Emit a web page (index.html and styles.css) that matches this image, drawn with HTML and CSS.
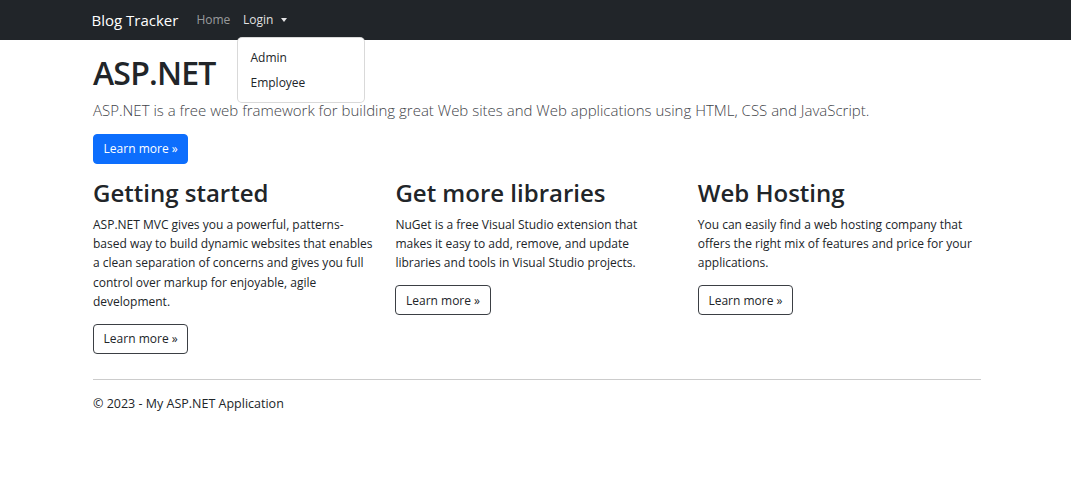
FILE: index.html
```html
<!DOCTYPE html>
<html lang="en">
<head>
<meta charset="utf-8">
<title>Home Page - Blog Tracker</title>
<link rel="stylesheet" href="styles.css">
</head>
<body>
<header class="navbar">
  <div class="nav-inner">
    <a class="brand" href="#">Blog Tracker</a>
    <ul class="nav-links">
      <li><a class="nav-link" href="#">Home</a></li>
      <li class="dropdown">
        <a class="nav-link nav-link-open" href="#">Login <span class="caret"></span></a>
        <ul class="dropdown-menu">
          <li><a class="dropdown-item" href="#">Admin</a></li>
          <li><a class="dropdown-item" href="#">Employee</a></li>
        </ul>
      </li>
    </ul>
  </div>
</header>
<main class="container">
  <section class="hero">
    <h1 class="hero-title">ASP.NET</h1>
    <p class="lead">ASP.NET is a free web framework for building great Web sites and Web applications using HTML, CSS and JavaScript.</p>
    <a class="btn btn-primary" href="#">Learn more »</a>
  </section>
  <section class="features">
    <div class="feature">
      <h2>Getting started</h2>
      <p>ASP.NET MVC gives you a powerful, patterns-based way to build dynamic websites that enables a clean separation of concerns and gives you full control over markup for enjoyable, agile development.</p>
      <a class="btn btn-outline" href="#">Learn more »</a>
    </div>
    <div class="feature">
      <h2>Get more libraries</h2>
      <p class="balanced">NuGet is a free Visual Studio extension that makes it easy to add, remove, and update libraries and tools in Visual Studio projects.</p>
      <a class="btn btn-outline" href="#">Learn more »</a>
    </div>
    <div class="feature">
      <h2>Web Hosting</h2>
      <p>You can easily find a web hosting company that offers the right mix of features and price for your applications.</p>
      <a class="btn btn-outline" href="#">Learn more »</a>
    </div>
  </section>
  <hr class="divider">
  <footer class="footer">
    <p>© 2023 - My ASP.NET Application</p>
  </footer>
</main>
</body>
</html>
```
FILE: styles.css
```css
* { box-sizing: border-box; }
html, body { margin: 0; padding: 0; }
body {
  font-family: "Open Sans", "Noto Sans", sans-serif;
  font-size: 12px;
  line-height: 19.2px;
  color: #212529;
  background: #fff;
}
a { text-decoration: none; }
ul { list-style: none; margin: 0; padding: 0; }
.container { width: 888px; margin-left: calc(50% - 442.5px); }

.navbar { background: #212529; height: 40px; }
.nav-inner { width: 888px; margin: 0 auto; display: flex; align-items: center; height: 40px; }
.brand { color: #fff; font-size: 15px; line-height: 24px; margin-right: 11.6px; }
.nav-links { display: flex; align-items: center; }
.nav-links > li { position: relative; }
.nav-link { display: block; padding: 0 6.4px; color: rgba(255,255,255,.55); }
.nav-link-open { color: rgba(255,255,255,.88); }
.caret {
  display: inline-block; vertical-align: 2px; margin-left: 4px;
  border-top: 4px solid currentColor; border-left: 3.5px solid transparent; border-right: 3.5px solid transparent;
}
.dropdown-menu {
  position: absolute; left: 0; top: 26.6px; width: 128px;
  background: #fff; border: 1px solid rgba(0,0,0,.15); border-radius: 5px;
  padding: 6.4px 0; z-index: 10;
}
.dropdown-item { display: block; padding: 3.2px 12.8px; color: #212529; }

.hero { padding-top: 12px; }
.hero-title { font-size: 32px; line-height: 42px; font-weight: 600; letter-spacing: -0.8px; margin: 0 0 4px; }
.lead { font-size: 15px; line-height: 24px; font-weight: 300; color: #3f4449; margin: 0 0 12px; }
.btn {
  display: inline-block; padding: 4.4px 9.6px; border: 1px solid transparent; border-radius: 4px;
  font-size: 12px; line-height: 19.2px;
}
.btn-primary { background: #0d6efd; border-color: #0d6efd; color: #fff; }
.btn-outline { border-color: #3b3f44; color: #212529; }

.features { display: grid; grid-template-columns: repeat(3, 1fr); column-gap: 19.2px; margin-top: 14px; }
.feature h2 { font-size: 24px; line-height: 30.7px; font-weight: 600; margin: 0 0 6.4px; }
.feature p { margin: 0 0 12.8px; }
.feature p.balanced { text-wrap: balance; }

.divider { border: 0; border-top: 1px solid #ccc; margin: 25px 0 0; }
.footer p { margin: 0; padding: 14px 0; font-size: 12.5px; }
```
